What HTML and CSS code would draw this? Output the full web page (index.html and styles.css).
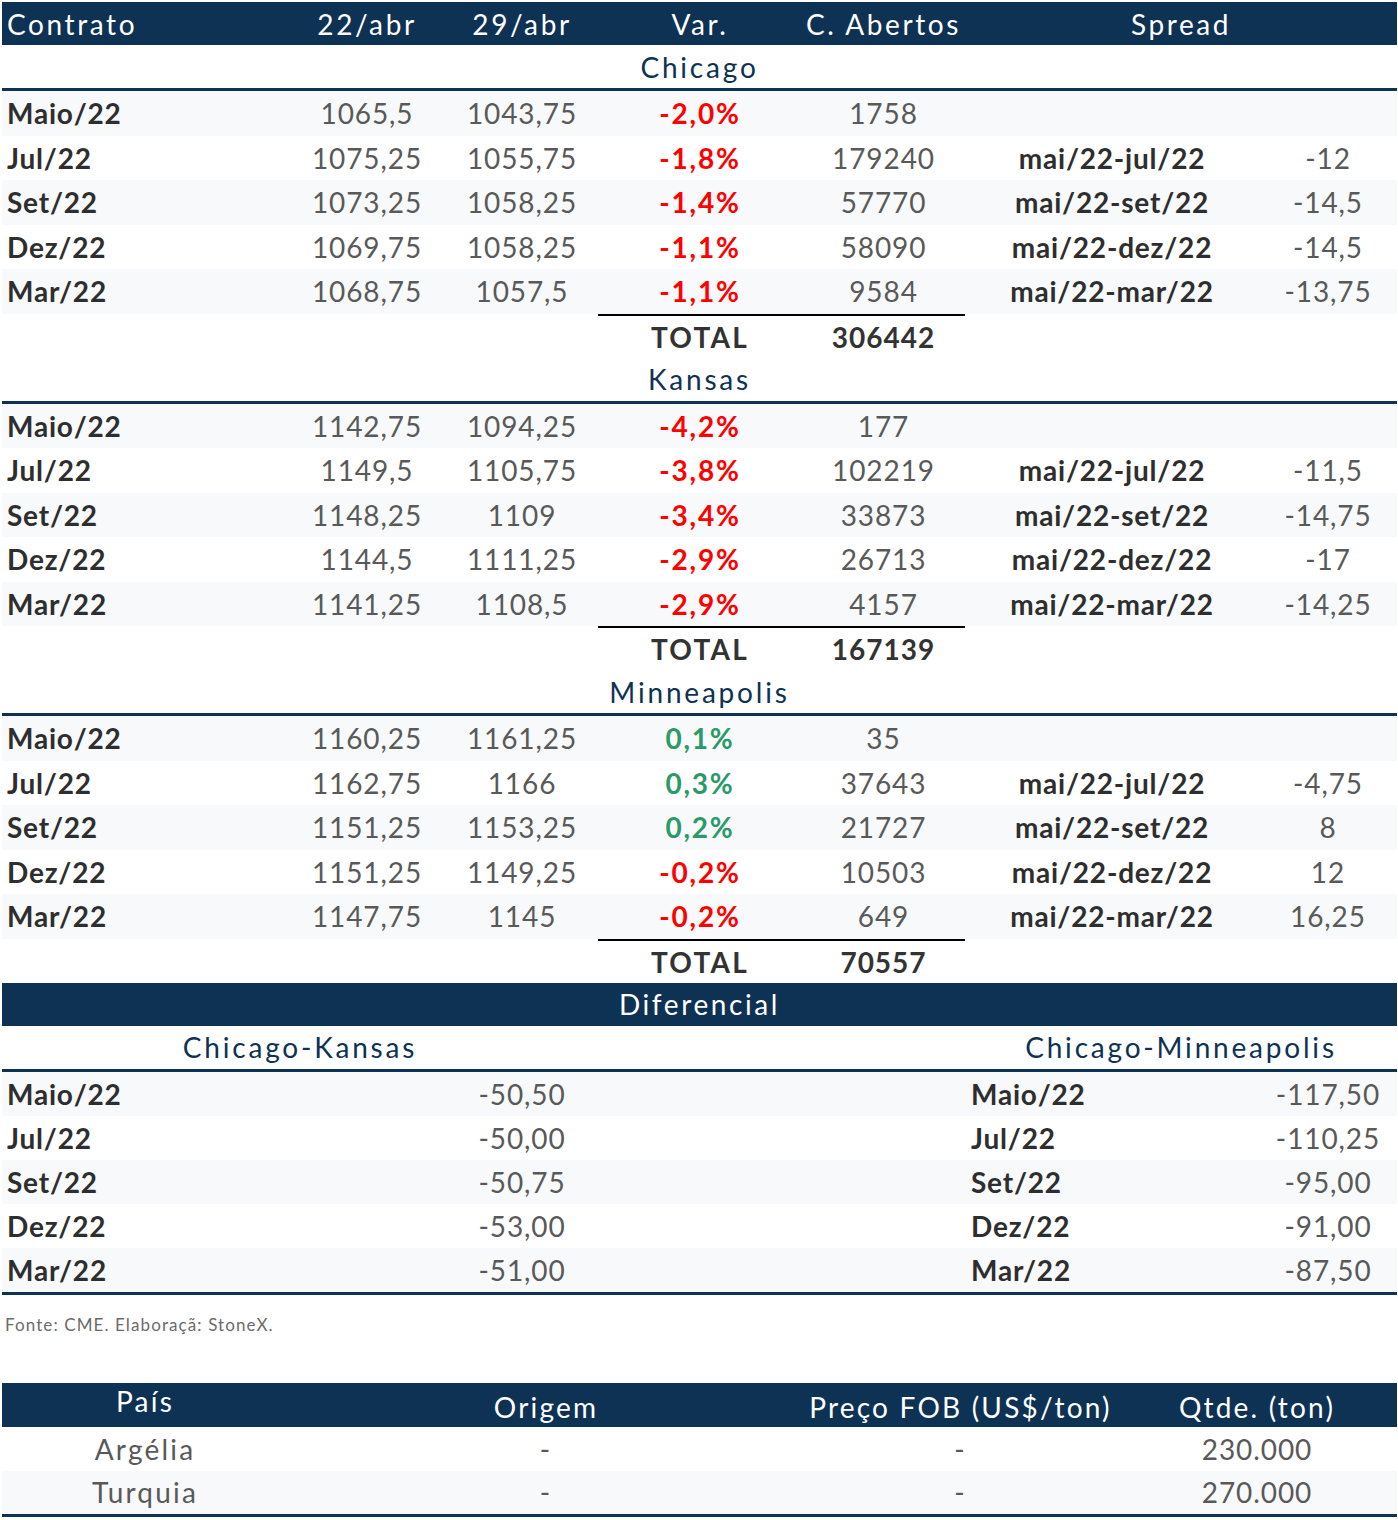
FILE: index.html
```html
<!DOCTYPE html>
<html lang="pt">
<head>
<meta charset="utf-8">
<title>Trigo - Contratos</title>
<link rel="stylesheet" href="styles.css">
</head>
<body>
<div class="page">
  <div class="tbl">
    <div class="row head">
      <div class="c1 l">Contrato</div><div>22/abr</div><div>29/abr</div><div>Var.</div><div>C. Abertos</div><div class="span2">Spread</div>
    </div>

    <div class="row title"><div class="all">Chicago</div></div>
    <div class="row alt"><div class="c1 lab">Maio/22</div><div>1065,5</div><div>1043,75</div><div class="neg">-2,0%</div><div>1758</div><div></div><div></div></div>
    <div class="row"><div class="c1 lab">Jul/22</div><div>1075,25</div><div>1055,75</div><div class="neg">-1,8%</div><div>179240</div><div class="lab">mai/22-jul/22</div><div>-12</div></div>
    <div class="row alt"><div class="c1 lab">Set/22</div><div>1073,25</div><div>1058,25</div><div class="neg">-1,4%</div><div>57770</div><div class="lab">mai/22-set/22</div><div>-14,5</div></div>
    <div class="row"><div class="c1 lab">Dez/22</div><div>1069,75</div><div>1058,25</div><div class="neg">-1,1%</div><div>58090</div><div class="lab">mai/22-dez/22</div><div>-14,5</div></div>
    <div class="row alt"><div class="c1 lab">Mar/22</div><div>1068,75</div><div>1057,5</div><div class="neg">-1,1%</div><div>9584</div><div class="lab">mai/22-mar/22</div><div>-13,75</div></div>
    <div class="row total"><div></div><div></div><div></div><div class="tot">TOTAL</div><div class="tot">306442</div><div></div><div></div></div>

    <div class="row title"><div class="all">Kansas</div></div>
    <div class="row alt"><div class="c1 lab">Maio/22</div><div>1142,75</div><div>1094,25</div><div class="neg">-4,2%</div><div>177</div><div></div><div></div></div>
    <div class="row"><div class="c1 lab">Jul/22</div><div>1149,5</div><div>1105,75</div><div class="neg">-3,8%</div><div>102219</div><div class="lab">mai/22-jul/22</div><div>-11,5</div></div>
    <div class="row alt"><div class="c1 lab">Set/22</div><div>1148,25</div><div>1109</div><div class="neg">-3,4%</div><div>33873</div><div class="lab">mai/22-set/22</div><div>-14,75</div></div>
    <div class="row"><div class="c1 lab">Dez/22</div><div>1144,5</div><div>1111,25</div><div class="neg">-2,9%</div><div>26713</div><div class="lab">mai/22-dez/22</div><div>-17</div></div>
    <div class="row alt"><div class="c1 lab">Mar/22</div><div>1141,25</div><div>1108,5</div><div class="neg">-2,9%</div><div>4157</div><div class="lab">mai/22-mar/22</div><div>-14,25</div></div>
    <div class="row total"><div></div><div></div><div></div><div class="tot">TOTAL</div><div class="tot">167139</div><div></div><div></div></div>

    <div class="row title"><div class="all">Minneapolis</div></div>
    <div class="row alt"><div class="c1 lab">Maio/22</div><div>1160,25</div><div>1161,25</div><div class="pos">0,1%</div><div>35</div><div></div><div></div></div>
    <div class="row"><div class="c1 lab">Jul/22</div><div>1162,75</div><div>1166</div><div class="pos">0,3%</div><div>37643</div><div class="lab">mai/22-jul/22</div><div>-4,75</div></div>
    <div class="row alt"><div class="c1 lab">Set/22</div><div>1151,25</div><div>1153,25</div><div class="pos">0,2%</div><div>21727</div><div class="lab">mai/22-set/22</div><div>8</div></div>
    <div class="row"><div class="c1 lab">Dez/22</div><div>1151,25</div><div>1149,25</div><div class="neg">-0,2%</div><div>10503</div><div class="lab">mai/22-dez/22</div><div>12</div></div>
    <div class="row alt"><div class="c1 lab">Mar/22</div><div>1147,75</div><div>1145</div><div class="neg">-0,2%</div><div>649</div><div class="lab">mai/22-mar/22</div><div>16,25</div></div>
    <div class="row total"><div></div><div></div><div></div><div class="tot">TOTAL</div><div class="tot">70557</div><div></div><div></div></div>

    <div class="row head"><div class="all">Diferencial</div></div>
    <div class="row title"><div class="left3">Chicago-Kansas</div><div class="mid2"></div><div class="span2">Chicago-Minneapolis</div></div>
    <div class="row alt drow"><div class="c1 lab">Maio/22</div><div></div><div>-50,50</div><div></div><div></div><div class="lab l2">Maio/22</div><div>-117,50</div></div>
    <div class="row drow"><div class="c1 lab">Jul/22</div><div></div><div>-50,00</div><div></div><div></div><div class="lab l2">Jul/22</div><div>-110,25</div></div>
    <div class="row alt drow"><div class="c1 lab">Set/22</div><div></div><div>-50,75</div><div></div><div></div><div class="lab l2">Set/22</div><div>-95,00</div></div>
    <div class="row drow"><div class="c1 lab">Dez/22</div><div></div><div>-53,00</div><div></div><div></div><div class="lab l2">Dez/22</div><div>-91,00</div></div>
    <div class="row alt drow last"><div class="c1 lab">Mar/22</div><div></div><div>-51,00</div><div></div><div></div><div class="lab l2">Mar/22</div><div>-87,50</div></div>
  </div>

  <p class="source">Fonte: CME. Elaboraçã: StoneX.</p>

  <div class="tbl2">
    <div class="row2 head2"><div class="pais">País</div><div>Origem</div><div>Preço FOB (US$/ton)</div><div>Qtde. (ton)</div></div>
    <div class="row2"><div>Argélia</div><div>-</div><div>-</div><div class="num">230.000</div></div>
    <div class="row2 alt last2"><div>Turquia</div><div>-</div><div>-</div><div class="num">270.000</div></div>
  </div>
</div>
</body>
</html>
```

FILE: styles.css
```css
* { box-sizing: border-box; }
html, body { margin: 0; padding: 0; background: #ffffff; }
body {
  font-family: "Lato", "Open Sans", sans-serif;
  color: #595959;
}
.page {
  width: 1398px;
  padding: 2px 1px 0 2px;
}
.tbl { width: 1395px; }
.row {
  display: grid;
  grid-template-columns: 286px 158px 152px 204px 163px 294px 138px;
  height: 44.5px;
  align-items: center;
  font-size: 28px;
  letter-spacing: 0.9px;
}
.row > div {
  text-align: center;
  white-space: nowrap;
}
.row > .l { text-align: left; padding-left: 5px; }
.row > .c1 { text-align: left; padding-left: 5px; }
.row > .l2 { text-align: left; padding-left: 6px; }
.alt { background: #f8f9fb; }
.head {
  background: #0e3254;
  color: #ffffff;
  height: 43px;
  letter-spacing: 2.6px;
}
.head > .span2, .title > .span2 { grid-column: span 2; }
.head > .all, .title > .all { grid-column: 1 / -1; }
.title {
  height: 46px;
  border-bottom: 3px solid #0e3254;
  color: #0e3254;
  letter-spacing: 2.8px;
}
.title > .left3 { grid-column: span 3; }
.title > .mid2 { grid-column: span 2; }
.lab { font-weight: 700; color: #2e2e2e; letter-spacing: 0.8px; }
.neg { color: #ff0000; font-weight: 700; letter-spacing: 1.8px; }
.pos { color: #2a9a68; font-weight: 700; letter-spacing: 1.8px; }
.total { height: 44px; }
.total > .tot {
  font-weight: 700;
  color: #333333;
  align-self: stretch;
  display: flex;
  align-items: center;
  justify-content: center;
  border-top: 2px solid #000000;
  letter-spacing: 1px;
}
.total > .tot:nth-child(4) { letter-spacing: 2.2px; }
.drow { height: 44px; }
.drow.last { height: 47px; border-bottom: 3px solid #0e3254; }
.source {
  margin: 0;
  height: 88px;
  padding: 19px 0 0 3px;
  font-size: 17px;
  letter-spacing: 1.1px;
  color: #6b6b6b;
}
.tbl2 { width: 1395px; }
.row2 {
  display: grid;
  grid-template-columns: 286px 516px 313px 280px;
  height: 44px;
  align-items: center;
  font-size: 28px;
  letter-spacing: 2.2px;
}
.row2 > div { text-align: center; white-space: nowrap; }
.row2 > .num { letter-spacing: 0.9px; }
.head2 { background: #0e3254; color: #ffffff; align-items: end; padding-bottom: 3px; }
.head2 > .pais { align-self: center; padding-bottom: 4px; }
.last2 { height: 46px; border-bottom: 3px solid #0e3254; }
```
